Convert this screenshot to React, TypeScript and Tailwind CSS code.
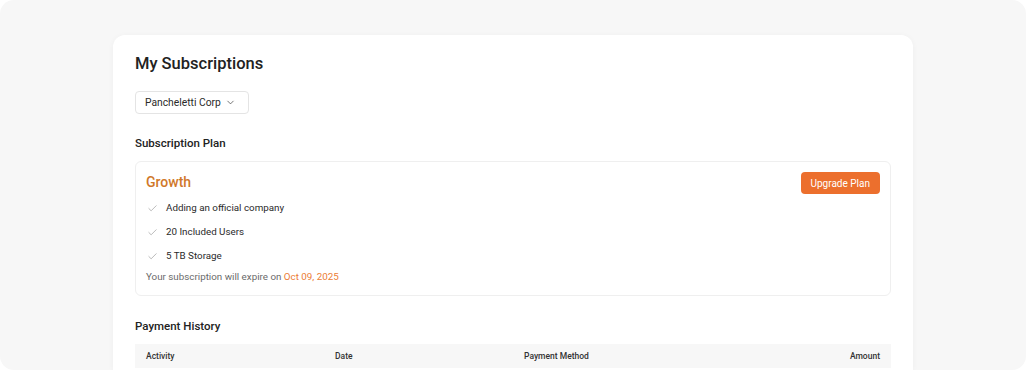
import { Check, ChevronDown } from "lucide-react";

const features = ["Adding an official company", "20 Included Users", "5 TB Storage"];

const columns = ["Activity", "Date", "Payment Method", "Amount"];

export default function App() {
  return (
    <div className="w-[1026px] h-[370px] bg-white overflow-hidden" style={{ fontFamily: "Roboto, 'Liberation Sans', sans-serif" }}>
      <div className="h-full bg-[#f7f7f7] rounded-[14px] pt-[35px] flex justify-center">
        <div className="w-[800px] bg-white rounded-t-[12px] shadow-[0_1px_6px_rgba(0,0,0,0.04)] px-[22px] pt-[17px] text-[#222]">
          {/* Header */}
          <h1 className="text-[16.5px] leading-6 font-medium">My Subscriptions</h1>

          <button className="mt-[15px] h-[23px] pl-[9px] pr-[12px] flex items-center gap-[4px] border border-[#e4e4e4] rounded-[4px] text-[10.3px] text-[#2a2a2a]">
            Pancheletti Corp
            <ChevronDown className="w-[11px] h-[11px] text-[#444]" strokeWidth={1.6} />
          </button>

          {/* Subscription plan */}
          <h2 className="mt-5 text-[11.5px] leading-[18px] font-medium">Subscription Plan</h2>
          <div className="mt-[9px] border border-[#efefef] rounded-[6px] px-[10px] pt-[10px] pb-[10px]">
            <div className="flex items-start justify-between">
              <div className="text-[14px] leading-5 font-medium text-[#d0782a]">Growth</div>
              <button className="h-[22px] px-[10px] bg-[#ec6f2d] rounded-[4px] text-white text-[10px]">Upgrade Plan</button>
            </div>
            <ul className="mt-[6px] flex flex-col gap-2">
              {features.map((f) => (
                <li key={f} className="flex items-center gap-[8px] text-[9.8px] leading-4 text-[#2a2a2a]">
                  <Check className="w-[11px] h-[11px] ml-[1px] text-[#9a9a9a]" strokeWidth={1.5} />
                  {f}
                </li>
              ))}
            </ul>
            <p className="mt-[5px] text-[9.8px] leading-4 text-[#6b6b6b]">
              Your subscription will expire on <span className="text-[#ec7d35]">Oct 09, 2025</span>
            </p>
          </div>

          {/* Payment history */}
          <h2 className="mt-[21px] text-[11.5px] leading-[18px] font-medium">Payment History</h2>
          <div className="mt-[9px] bg-[#f7f7f7] h-[24px] grid grid-cols-4 items-center text-[8.5px] font-medium text-[#333]">
            {columns.map((c, i) => (
              <div key={c} className={i === 3 ? "px-[11px] text-right" : "px-[11px]"}>
                {c}
              </div>
            ))}
          </div>
        </div>
      </div>
    </div>
  );
}
